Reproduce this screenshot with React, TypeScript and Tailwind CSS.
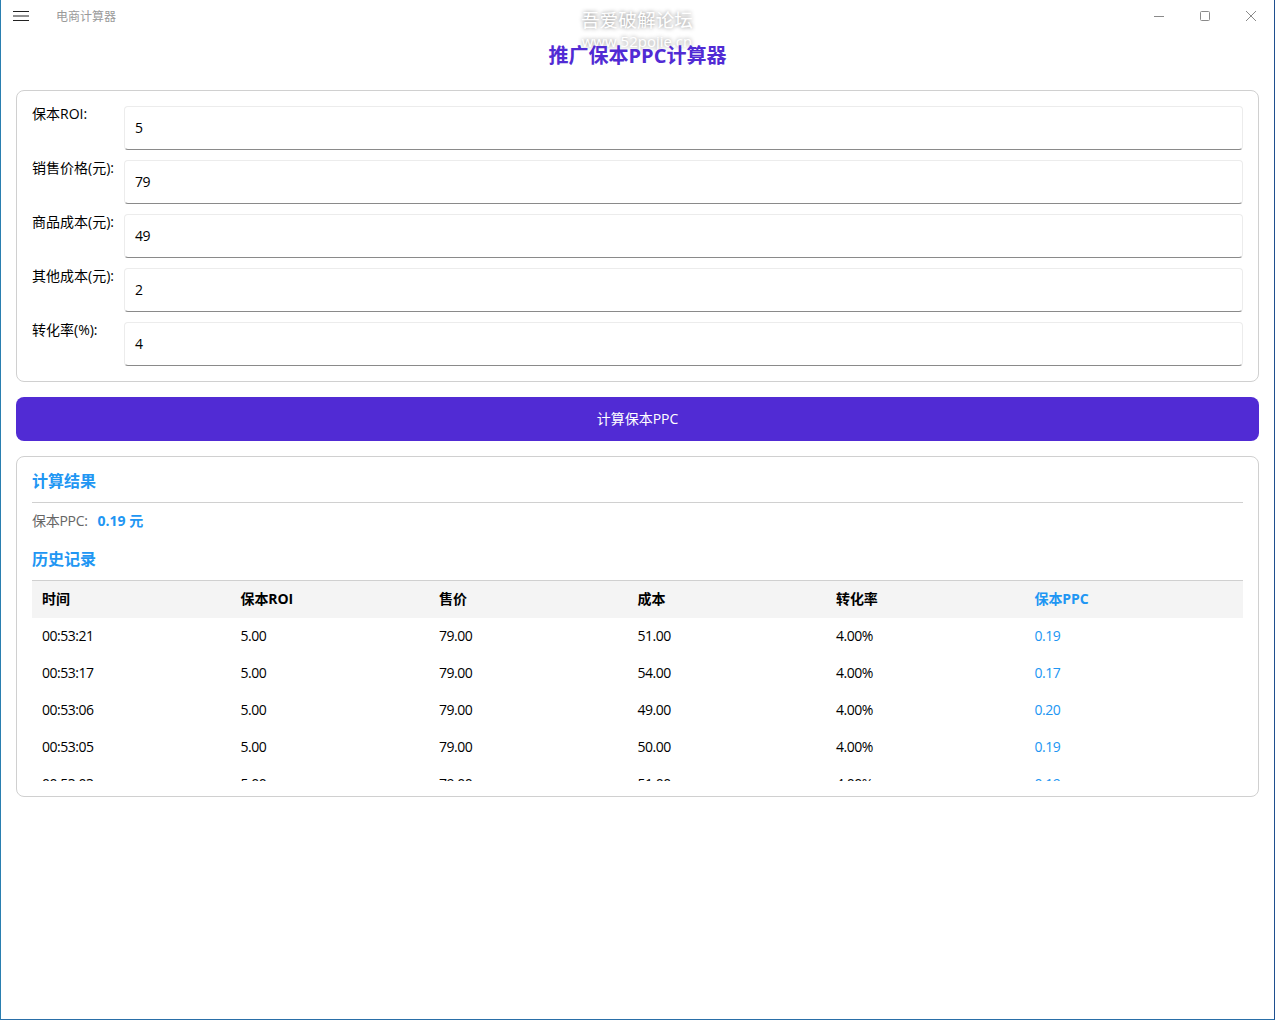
import React from 'react';

const FIELDS = [
  { label: '保本ROI:', value: '5' },
  { label: '销售价格(元):', value: '79' },
  { label: '商品成本(元):', value: '49' },
  { label: '其他成本(元):', value: '2' },
  { label: '转化率(%):', value: '4' },
];

const HEADERS = ['时间', '保本ROI', '售价', '成本', '转化率', '保本PPC'];

const ROWS = [
  ['00:53:21', '5.00', '79.00', '51.00', '4.00%', '0.19'],
  ['00:53:17', '5.00', '79.00', '54.00', '4.00%', '0.17'],
  ['00:53:06', '5.00', '79.00', '49.00', '4.00%', '0.20'],
  ['00:53:05', '5.00', '79.00', '50.00', '4.00%', '0.19'],
  ['00:53:03', '5.00', '79.00', '51.00', '4.00%', '0.19'],
];

const TitleBar = () => (
  <div className="relative flex h-[32px] items-center">
    <svg width="16" height="12" viewBox="0 0 16 12" className="ml-[12px] text-[#222]">
      <path d="M0 1.5H16M0 6H16M0 10.5H16" stroke="currentColor" strokeWidth="1" fill="none" />
    </svg>
    <span className="ml-[27px] mt-[1px] text-[12px] text-[#9a9a9a]">电商计算器</span>
    <div className="ml-auto flex items-center gap-[36px] pr-[18px] text-[#8a8a8a]">
      <svg width="10" height="10" viewBox="0 0 10 10">
        <path d="M0 5.5H10" stroke="currentColor" strokeWidth="1" />
      </svg>
      <svg width="10" height="10" viewBox="0 0 10 10">
        <rect x="0.5" y="0.5" width="9" height="9" rx="1" stroke="currentColor" fill="none" />
      </svg>
      <svg width="10" height="10" viewBox="0 0 10 10">
        <path d="M0 0L10 10M10 0L0 10" stroke="currentColor" strokeWidth="1" />
      </svg>
    </div>
    {/* watermark */}
    <div className="absolute left-[436px] top-[7px] w-[400px] text-center text-white [text-shadow:0_0_4px_#808080]">
      <div className="text-[18.7px] leading-[25px]">吾爱破解论坛</div>
      <div className="text-[15px] leading-[19px]">www.52pojie.cn</div>
    </div>
  </div>
);

export default function App() {
  return (
    <div className="h-[1020px] w-[1275px] overflow-hidden border-x border-b border-x-[#2a7fb0] border-b-[#2a6fa8] border-r-[#1f4f8f] bg-white font-['Open_Sans','Noto_Sans_CJK_SC',sans-serif] text-[14px] text-black">
      <TitleBar />
      <div className="flex flex-col px-[15px]">
        <h1 className="relative mt-[9px] h-[30px] text-center text-[20px] font-bold leading-[30px] text-[#512bd4]">
          推广保本PPC计算器
        </h1>
        <div className="mt-[19px] flex h-[292px] flex-col gap-[10px] rounded-[8px] border border-[#d0d0d0] px-[15px] py-[15px]">
          {FIELDS.map((f) => (
            <div key={f.label} className="flex h-[44px] items-start">
              <div className="w-[92px] shrink-0 whitespace-nowrap leading-[16px]">{f.label}</div>
              <div className="flex h-[44px] flex-1 items-center rounded-[4px] border border-[#ececec] border-b-[#8a8a8a] pb-[1px] pl-[10px] tracking-[-0.5px]">
                {f.value}
              </div>
            </div>
          ))}
        </div>
        <div className="mt-[15px] flex h-[44px] items-center justify-center rounded-[8px] bg-[#512bd4] pb-[2px] text-white">
          计算保本PPC
        </div>
        <div className="mt-[15px] h-[341px] rounded-[8px] border border-[#d0d0d0] px-[15px]">
          <h2 className="mt-[11px] text-[16px] font-bold leading-[26px] text-[#2196f3]">计算结果</h2>
          <div className="mt-[8px] border-t border-[#d0d0d0]" />
          <div className="mt-[7px] flex h-[20px] items-center">
            <span className="tracking-[-0.3px] text-[#666]">保本PPC:</span>
            <span className="ml-[10px] font-bold text-[#2196f3]">0.19 元</span>
          </div>
          <h2 className="mt-[16px] text-[16px] font-bold leading-[26px] text-[#2196f3]">历史记录</h2>
          <div className="mt-[8px] h-[201px] overflow-hidden border-t border-[#d0d0d0]">
            <div className="grid h-[37px] grid-cols-[repeat(5,198.5px)_1fr] items-center bg-[#f4f4f4] pb-[2px] font-bold tracking-[-0.1px]">
              {HEADERS.map((h, i) => (
                <div key={h} className={i === 5 ? 'pl-[10px] text-[#2196f3]' : 'pl-[10px]'}>
                  {h}
                </div>
              ))}
            </div>
            {ROWS.map((row) => (
              <div key={row[0]} className="grid h-[37px] grid-cols-[repeat(5,198.5px)_1fr] items-center pb-[2px] tracking-[-0.5px]">
                {row.map((cell, i) => (
                  <div key={i} className={i === 5 ? 'pl-[10px] text-[#2196f3]' : 'pl-[10px]'}>
                    {cell}
                  </div>
                ))}
              </div>
            ))}
          </div>
        </div>
      </div>
    </div>
  );
}
